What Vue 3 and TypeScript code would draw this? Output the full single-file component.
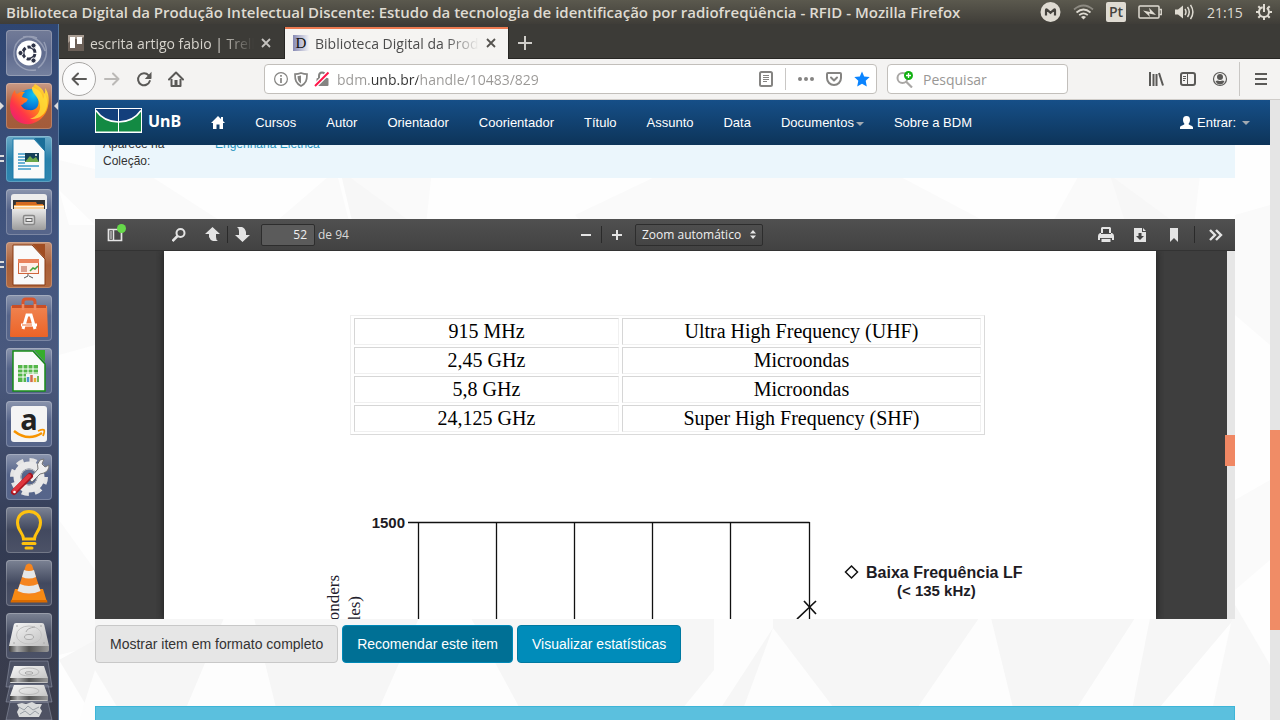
<script setup lang="ts">
import { ref } from 'vue'

interface Frequency {
  value: string
  band: string
}

const address = ref('bdm.unb.br/handle/10483/829')
const query = ref('')
const pageNumber = ref('52')
const zoom = ref('auto')

const menu: string[] = ['Cursos', 'Autor', 'Orientador', 'Coorientador', 'Título', 'Assunto', 'Data']

const frequencies: Frequency[] = [
  { value: '915 MHz', band: 'Ultra High Frequency (UHF)' },
  { value: '2,45 GHz', band: 'Microondas' },
  { value: '5,8 GHz', band: 'Microondas' },
  { value: '24,125 GHz', band: 'Super High Frequency (SHF)' },
]

const gridLines: number[] = [254, 332, 410, 488, 566, 645]
</script>

<template>
  <div class="desktop">
    <header class="panel">
      <div class="panel-title">Biblioteca Digital da Produção Intelectual Discente: Estudo da tecnologia de identificação por radiofreqüência - RFID - Mozilla Firefox</div>
      <div class="indicators">
        <svg width="21" height="20" viewBox="0 0 21 20"><circle cx="10.500" cy="10" r="10" fill="#dfdbd2" /><path d="M6 13.500V8.300q0-1.300 1-.7l3.500 3.200L14 7.600q1-.6 1 .7v5.200" fill="none" stroke="#45433e" stroke-width="2.200" /></svg>
        <svg width="21" height="16" viewBox="0 0 21 16" fill="none" stroke-width="1.700"><path d="M1 5.500q9.500-8 19 0" stroke="#8d8a82" /><path d="M3.500 8.500q7-6 14 0M6.200 11.200q4.300-3.600 8.600 0" stroke="#dfdbd2" /><path d="M8 13q2.500-2 5 0l-2.500 2.600z" fill="#dfdbd2" stroke="none" /></svg>
        <span class="layout-badge">Pt</span>
        <svg width="24" height="14" viewBox="0 0 24 14"><rect x="1" y="1" width="20" height="12" rx="1" fill="none" stroke="#dfdbd2" stroke-width="1.500" /><path d="M21.500 4.500H23.300v5H21.500" fill="none" stroke="#dfdbd2" stroke-width="1.300" /><path d="M5 5.500 12 7l-1-4.200L18 10l-7-1.600 1 3.500z" fill="#dfdbd2" /></svg>
        <svg width="21" height="18" viewBox="0 0 21 18"><path d="M1 6.500h3L9 2.500v13l-5-4H1z" fill="#dfdbd2" /><path d="M11 6q2 3 0 6M13.500 4q3.500 5 0 10M16.500 1.800q4.800 7.200 0 14.400" fill="none" stroke="#dfdbd2" stroke-width="1.500" /></svg>
        <time class="clock">21:15</time>
        <svg width="16" height="16" viewBox="0 0 16 16" fill="none" stroke="#dfdbd2"><circle cx="8" cy="8" r="5" stroke-width="2" stroke-dasharray="27 4.400" stroke-dashoffset="-26" /><path d="M8 0v8M8 13v3M0 8h3M13 8h3M2.300 2.300l2 2M13.700 2.300l-2 2M2.300 13.700l2-2M13.700 13.700l-2-2" stroke-width="2" /></svg>
      </div>
    </header>

    <aside class="launcher">
      <svg class="defs" width="0" height="0">
        <defs>
          <linearGradient id="metal" x1="0" y1="0" x2="1" y2="1"><stop offset="0" stop-color="#f7f7f7" /><stop offset="1" stop-color="#bdbdbd" /></linearGradient>
          <linearGradient id="dark-edge"><stop offset="0" stop-color="#3e3e3e" /><stop offset=".2" stop-color="#aaa" /><stop offset=".5" stop-color="#555" /><stop offset="1" stop-color="#999" /></linearGradient>
          <linearGradient id="cabinet" x1="0" y1="0" x2="0" y2="1"><stop offset="0" stop-color="#e8e8e8" /><stop offset="1" stop-color="#9c9c9c" /></linearGradient>
          <linearGradient id="bag" x1="0" y1="0" x2="0" y2="1"><stop offset="0" stop-color="#f08350" /><stop offset="1" stop-color="#ec6327" /></linearGradient>
          <linearGradient id="fox" x1="1" y1="0" x2="0" y2="1"><stop offset="0" stop-color="#fff44f" /><stop offset=".4" stop-color="#ff980e" /><stop offset=".7" stop-color="#ff3647" /><stop offset="1" stop-color="#e31587" /></linearGradient>
          <radialGradient id="globe" cx=".6" cy=".2" r=".8"><stop offset="0" stop-color="#10c4ee" /><stop offset=".6" stop-color="#0674d9" /><stop offset="1" stop-color="#133686" /></radialGradient>
        </defs>
      </svg>

      <button class="tile dash" aria-label="Dash">
        <svg viewBox="0 0 46 46"><g fill="none" stroke="#c9cedb" stroke-opacity=".45" stroke-width="1.500"><path d="M8 22C9 9 20 4 31 8M38 12c5 10 2 20-6 26M30 40C18 42 7 34 8 22M17 7c10-2 19 4 22 14" /></g><circle cx="23" cy="23" r="12.500" fill="#fff" /><circle cx="23" cy="23" r="6" fill="none" stroke="#2f3448" stroke-width="3" stroke-dasharray="10.500 2" stroke-dashoffset="-1" /><g fill="#2f3448" stroke="#fff"><circle cx="14.500" cy="23" r="2.600" /><circle cx="27.500" cy="15.500" r="2.600" /><circle cx="27.500" cy="30.500" r="2.600" /></g></svg>
      </button>
      <button class="tile firefox" aria-label="Firefox">
        <svg viewBox="0 0 46 46"><circle cx="25" cy="20" r="14" fill="url(#globe)" /><path d="M6 12q1-3 3-5 0 3 2 4 4-3 8-2-3 2-3 5 4 1 6 2-1 3-4 4-1 2-3 2 2 5 8 5c7 1 11-4 9-11-1-5-5-7-6-11l3-4c6 3 9 7 9 10 2-2 1-4 1-6 4 5 5 13 2 22-4 10-13 15-22 14C11 40 4 33 4 23q0-6 2-11z" fill="url(#fox)" /><path d="M26 4c-1 7 7 9 8 18 1 7-4 12-10 14 9 1 16-5 17-13 1-6-1-11-3-13q1 3-1 6C37 10 32 6 26 4z" fill="#ffdf3a" opacity=".8" /></svg>
        <span class="running"></span><span class="focused"></span>
      </button>
      <button class="tile writer" aria-label="LibreOffice Writer">
        <svg viewBox="0 0 46 46"><path d="M7 3h21l11 12v28H7z" fill="#fafafa" stroke="#1a78a8" /><path d="M28 2h11v13z" fill="#1a6e99" /><g stroke="#3d9ac9" stroke-width="1.500"><path d="M12 18h7M12 21h7M12 24h7M12 27h7M12 30h21M12 33h13" /></g><rect x="19" y="17" width="14" height="9" fill="#153f58" /><path d="m19 26 5-6 3 3 3-2 3 5z" fill="#6da84a" /><circle cx="30" cy="19" r="1" fill="#fff" /></svg>
        <span class="multi"></span>
      </button>
      <button class="tile glass" aria-label="Arquivos">
        <svg viewBox="0 0 46 46"><path d="M5 8q0-3 3-3h30q3 0 3 3v12H5z" fill="#ececec" /><path d="M7 11h32v10H7z" fill="#343434" /><path d="M10 13h20l1 2h6v6H9z" fill="#d56a20" /><path d="M8 16h30v6H8z" fill="#f9a94b" /><path d="M8 17.500h30M8 19h30" stroke="#fff3df" /><path d="M6 20h34v19q0 2-2 2H8q-2 0-2-2z" fill="url(#cabinet)" /><rect x="17.500" y="26.500" width="11" height="9" rx="1.500" fill="#ddd" stroke="#888" stroke-width="1.500" /><rect x="20" y="29.500" width="6" height="3" fill="#eee" stroke="#666" /></svg>
      </button>
      <button class="tile impress" aria-label="LibreOffice Impress">
        <svg viewBox="0 0 46 46"><path d="M7 3h19l13 14v26H7z" fill="#fafafa" stroke="#8a3a12" /><path d="M26 2h13v14z" fill="#a14d22" /><rect x="12.500" y="17.500" width="20" height="14" fill="#fff0e8" stroke="#d0663c" /><path d="M12 17h21v4H12z" fill="#e9825b" /><path d="M15 25h6M15 27h6M15 29h6" stroke="#b5533b" /><path d="m24 29 3-3 2 1 3-3" fill="none" stroke="#45a43c" stroke-width="1.500" /><path d="M22 32v2l-4 2M23 34l4 2" stroke="#555" fill="none" /></svg>
        <span class="multi"></span>
      </button>
      <button class="tile glass" aria-label="Programas">
        <svg viewBox="0 0 46 46"><path d="M17 13V7q0-3 3-3h6q3 0 3 3v6" fill="none" stroke="#d8562d" stroke-width="3" /><path d="M5 11h36l1 30q0 1-1 1H5q-1 0-1-1z" fill="url(#bag)" /><path d="M6 10h34v3H6z" fill="#c94f26" /><path d="M17 15V9M29 15V9" stroke="#ef8a62" stroke-width="2.500" /><path d="m17 34 4-14h4l4 14M15 30h16" fill="none" stroke="#fff" stroke-width="3" /><path d="M16 30h10" stroke="#ec6b31" /></svg>
      </button>
      <button class="tile glass" aria-label="LibreOffice Calc">
        <svg viewBox="0 0 46 46"><path d="M7 3h20l12 13v27H7z" fill="#fafafa" stroke="#178c17" stroke-width="1.500" /><path d="M28 2h11v12z" fill="#35ad2c" /><path d="M12 17h20v17H12z" fill="#54b649" /><path d="M12 21h20M12 25h20M12 29h20M17 17v17M22 17v17M27 17v17" stroke="#fff" /><path d="M20 26h13v9H20z" fill="#f3f3f3" /><path d="M22 34v-5" stroke="#4a94cc" stroke-width="2.500" /><path d="M25.500 34v-7" stroke="#d2694e" stroke-width="2.500" /><path d="M29 34v-4" stroke="#e7ae34" stroke-width="2.500" /><path d="M32 34v-6" stroke="#77b85b" stroke-width="2" /></svg>
      </button>
      <button class="tile glass" aria-label="Amazon">
        <svg viewBox="0 0 46 46"><rect x="5" y="5" width="36" height="36" rx="3" fill="#f4f4f4" /><text x="23" y="29" text-anchor="middle" font-family="Open Sans, sans-serif" font-weight="700" font-size="29" fill="#222">a</text><path d="M8 30q14 11 28 2" fill="none" stroke="#f79400" stroke-width="2.500" /><path d="M32 30q5-2 6-1 1 1-1 6" fill="none" stroke="#f79400" stroke-width="1.800" /></svg>
      </button>
      <button class="tile glass" aria-label="Configurações">
        <svg viewBox="0 0 46 46"><circle cx="23" cy="23" r="16.500" fill="none" stroke="#e4e4e4" stroke-width="5" stroke-dasharray="7 5.960" /><circle cx="23" cy="23" r="12" fill="none" stroke="#e9e9e9" stroke-width="7" /><circle cx="23" cy="23" r="8" fill="none" stroke="#b8b8b8" /><path d="m23 25 9-10q-2-5 2-9l4-1-2 5 3 3 4-2q0 6-5 8l-4 1-8 8z" fill="#efefef" stroke="#777" /><path d="m8 38 16-16" stroke="#a61520" stroke-width="6" stroke-linecap="round" /><path d="m8 37 15-15" stroke="#df353d" stroke-width="4" stroke-linecap="round" /><circle cx="8.500" cy="38" r="1.300" fill="#fff" /></svg>
      </button>
      <button class="tile dim" aria-label="Ideias">
        <svg viewBox="0 0 46 46" fill="none" stroke="#ffc20e" stroke-width="3"><path d="M17.500 32c0-6-6-8-6-16.500C11.500 9 16 4.500 23 4.500S34.500 9 34.500 15.500c0 8.500-6 10.500-6 16.500z" /><path d="M17 36.500h12M20 41h6" stroke-linecap="round" /></svg>
      </button>
      <button class="tile dim" aria-label="VLC">
        <svg viewBox="0 0 46 46"><path d="M9 29h28l4 13H5z" fill="#f78a14" /><path d="m5 40-.5 2.500h37L41 40z" fill="#d96b00" /><path d="M20 5q3-3 6 0l9 27q-12 7-24 0z" fill="#f5851f" /><path d="m18 10-2 7q7 3 14 0l-2-7q-5 2-10 0zM14 24l-2.500 7q11.500 5 23 0L32 24q-9 4-18 0z" fill="#e6e8e8" /></svg>
      </button>
      <button class="tile dim" aria-label="Disco">
        <svg viewBox="0 0 46 46"><path d="M10 10h26q2 0 2.300 2L43 33H3l4.700-21q.3-2 2.300-2z" fill="url(#metal)" /><path d="M3 33h40v4q0 2-2 2H5q-2 0-2-2z" fill="url(#dark-edge)" /><ellipse cx="23" cy="22" rx="12.500" ry="9" fill="none" stroke="#c3c3c3" /><ellipse cx="23" cy="24" rx="4.500" ry="2.500" fill="#ddd" stroke="#aaa" /><path d="M29 14q-8 1-9 5M10 13h2M34 13h2M7 30h2M37 30h2" fill="none" stroke="#aaa" /></svg>
      </button>
      <button class="folded" aria-label="Discos e lixeira">
        <svg width="52" height="60" viewBox="0 0 52 60"><g fill="#8c94aa" fill-opacity=".25" stroke="#a4aabd" stroke-opacity=".45"><path d="M7 1h38l4 26H3z" /><path d="M7 25h38l4 17H3z" /><path d="M7 42h38l4 18H3z" /></g><path d="M11 6h30l4 12v4q0 1-1 1H8q-1 0-1-1v-4z" fill="url(#metal)" /><path d="M7 18h38v4H7z" fill="url(#dark-edge)" /><ellipse cx="26" cy="12" rx="10" ry="4" fill="none" stroke="#bbb" /><ellipse cx="26" cy="13" rx="4" ry="1.300" fill="none" stroke="#aaa" /><path d="M11 25h30l4 11v4q0 1-1 1H8q-1 0-1-1v-4z" fill="url(#metal)" /><path d="M7 36h38v4H7z" fill="url(#dark-edge)" /><ellipse cx="26" cy="31" rx="10" ry="3.500" fill="none" stroke="#bbb" /><path d="m14 44 5-1 4 1 6-2 4 2 6 0-2 4 2 3-3 6H16l-2-5 2-4z" fill="#d9dadb" /><path d="m16 47 5 3 4-4 5 4 6-3M17 54l5-3 5 4 5-4 4 3" fill="none" stroke="#999fa6" /></svg>
      </button>
    </aside>

    <section class="browser">
      <div class="tabs" role="tablist">
        <div class="tab" role="tab" aria-selected="false">
          <svg width="16" height="16" viewBox="0 0 16 16"><rect width="16" height="16" fill="#a99d93" /><path d="M0 8 5 3l6 2 5-3v14H0z" fill="#6b6058" /><rect x="2" y="2" width="5" height="11" fill="#fff" /><rect x="9" y="2" width="5" height="7" fill="#fff" /></svg>
          <span class="tab-label">escrita artigo fabio | Trello</span>
          <button class="icon-button" aria-label="Fechar aba"><svg width="12" height="12" viewBox="0 0 12 12" stroke="#c5c3bf" stroke-width="1.800"><path d="m2 2 8 8M10 2l-8 8" /></svg></button>
        </div>
        <div class="tab active" role="tab" aria-selected="true">
          <svg width="16" height="16" viewBox="0 0 16 16"><defs><linearGradient id="dspace"><stop stop-color="#8689b3" /><stop offset="1" stop-color="#f2f2f5" /></linearGradient></defs><rect width="16" height="16" fill="url(#dspace)" /><text x="8" y="13" text-anchor="middle" font-family="Liberation Serif, serif" font-size="15" fill="#111">D</text></svg>
          <span class="tab-label">Biblioteca Digital da Produção</span>
          <button class="icon-button" aria-label="Fechar aba"><svg width="12" height="12" viewBox="0 0 12 12" stroke="#55534f" stroke-width="1.800"><path d="m2 2 8 8M10 2l-8 8" /></svg></button>
        </div>
        <button class="icon-button new-tab" aria-label="Nova aba"><svg width="14" height="14" viewBox="0 0 14 14" stroke="#d0ceca" stroke-width="2"><path d="M7 0v14M0 7h14" /></svg></button>
      </div>

      <nav class="toolbar">
        <button class="back" aria-label="Voltar"><svg width="16" height="16" viewBox="0 0 16 16" fill="none" stroke="#5a5957" stroke-width="2" stroke-linecap="round" stroke-linejoin="round"><path d="M15 8H1.500M7 2.500 1.500 8 7 13.500" /></svg></button>
        <button class="icon-button" aria-label="Avançar"><svg width="16" height="16" viewBox="0 0 16 16" fill="none" stroke="#bbb9b7" stroke-width="2" stroke-linecap="round" stroke-linejoin="round"><path d="M1 8h13.500M9 2.500 14.500 8 9 13.500" /></svg></button>
        <button class="icon-button" aria-label="Recarregar"><svg width="16" height="16" viewBox="0 0 16 16"><path d="M12.600 4.300A6 6 0 1 0 13.800 10" fill="none" stroke="#5a5957" stroke-width="2" stroke-linecap="round" /><path d="M15.500.800v6.400q0 .8-.8.800H8.800z" fill="#5a5957" /></svg></button>
        <button class="icon-button" aria-label="Página inicial"><svg width="16" height="16" viewBox="0 0 16 16" fill="none" stroke="#5a5957" stroke-width="2" stroke-linejoin="round"><path d="M1 8.500 8 1.500l7 7" stroke-linecap="round" /><path d="M3.500 8v7h9V8" /><path d="M8 15V9" stroke-width="3" /></svg></button>

        <div class="field url">
          <svg width="14" height="14" viewBox="0 0 14 14" fill="none" stroke="#858482"><circle cx="7" cy="7" r="6.400" stroke-width="1.200" /><path d="M7 6v5M7 3v1.700" stroke-width="1.700" /></svg>
          <svg width="14" height="15" viewBox="0 0 14 15"><path d="M7 1q3 1.200 6 1.200c0 6-1 9.300-6 11.800-5-2.500-6-5.800-6-11.800Q4 2.200 7 1z" fill="none" stroke="#858482" stroke-width="1.700" /><path d="M7 3.500v8C4.500 10 3.700 8 3.500 4.300z" fill="#858482" /></svg>
          <svg width="16" height="16" viewBox="0 0 16 16"><path d="M5 7V5q0-3.500 3-3.500T11.500 5v2" fill="none" stroke="#858482" stroke-width="2" /><rect x="2.500" y="7" width="12" height="8" rx="1" fill="#858482" /><path d="M1 15 14.500 1.500" stroke="#fff" stroke-width="4.500" /><path d="M1 15 14.500 1.500" stroke="#ff1548" stroke-width="2" /></svg>
          <input v-model="address" class="address" aria-label="Endereço" />
          <button class="icon-button" aria-label="Modo de leitura"><svg width="14" height="16" viewBox="0 0 14 16" fill="none" stroke="#858482"><rect x="1" y="1" width="12" height="14" rx="1.500" stroke-width="2" /><path d="M4 4.500h6M4 6.500h6M4 8.500h6M4 10.500h4" /></svg></button>
          <span class="divider"></span>
          <button class="icon-button" aria-label="Mais ações"><svg width="16" height="4" viewBox="0 0 16 4" fill="#858482"><circle cx="2" cy="2" r="2" /><circle cx="8" cy="2" r="2" /><circle cx="14" cy="2" r="2" /></svg></button>
          <button class="icon-button" aria-label="Pocket"><svg width="16" height="14" viewBox="0 0 16 14" fill="none" stroke="#858482" stroke-width="2" stroke-linejoin="round" stroke-linecap="round"><path d="M2 1h12q1 0 1 1v4a7 7 0 0 1-14 0V2q0-1 1-1z" /><path d="m5 5.500 3 3 3-3" /></svg></button>
          <button class="icon-button" aria-label="Favorito"><svg width="16" height="16" viewBox="0 0 16 16"><path d="m8 .5 2.200 4.900 5.500.6-4 3.800 1.100 5.700L8 12.800l-4.800 2.700 1.100-5.700L.3 6l5.500-.6z" fill="#0a84ff" /></svg></button>
        </div>

        <div class="field search">
          <svg width="18" height="17" viewBox="0 0 18 17"><circle cx="6.500" cy="7" r="5" fill="none" stroke="#a9a7a5" stroke-width="2" /><path d="m10 10.500 6 6" stroke="#a9a7a5" stroke-width="2.200" /><circle cx="12.500" cy="4.500" r="4.500" fill="#12b012" /><path d="M12.500 2v5M10 4.500h5" stroke="#fff" stroke-width="1.300" /></svg>
          <input v-model="query" placeholder="Pesquisar" aria-label="Pesquisar" />
        </div>

        <div class="tools">
          <button class="icon-button" aria-label="Biblioteca"><svg width="16" height="16" viewBox="0 0 16 16" stroke="#5a5957" stroke-width="2"><path d="M2 1v14M5.500 3v12M8.500 3v12M11 2l4 12.500" /></svg></button>
          <button class="icon-button" aria-label="Painel lateral"><svg width="16" height="14" viewBox="0 0 16 14" fill="none" stroke="#5a5957"><rect x="1" y="1" width="14" height="12" rx="2" stroke-width="2" /><path d="M7.500 1v12M3 4.500h3M3 6.500h3M3 8.500h2" /></svg></button>
          <button class="icon-button" aria-label="Conta"><svg width="16" height="16" viewBox="0 0 16 16"><circle cx="8" cy="8" r="6.500" fill="none" stroke="#5a5957" stroke-width="1.200" /><circle cx="8" cy="6" r="3" fill="#5a5957" /><path d="M3.500 10q1.500-.5 2.500-.5 2 1 4 0 1 0 2.500.5-1.500 3.500-4.500 3.500T3.500 10z" fill="#5a5957" /></svg></button>
          <span class="divider tall"></span>
          <button class="icon-button" aria-label="Abrir menu"><svg width="12" height="12" viewBox="0 0 12 12" stroke="#5a5957" stroke-width="2"><path d="M0 1h12M0 6h12M0 11h12" /></svg></button>
        </div>
      </nav>

      <div class="viewport">
        <div class="site">
          <svg class="facets" viewBox="0 0 1211 620" preserveAspectRatio="none">
            <path d="M60 75h30l78 50H10L0 90V60zM277 70l14 55h-78zM281 70h92l-6 55h-28zM516 115l84-40h64l-4 50H525zM664 75h174l-38 50H660zM838 75l95 50H780zM1020 75h31l16 50H992zM1051 75h90l-6 50h-68zM0 255l36-10V125L0 90zM0 420l36 50v50L0 550zM1176 115l35-10v140l-35-30zM1176 400l35-20v80l-35 30z" fill="#fafafa" />
            <path d="M281 70l75 55h-62zM1051 75l68 50h-52z" fill="#f7f7f7" />
            <path d="M0 520h36v26L0 555z" fill="#f9f9f9" />
            <path d="M36 518h1140l-86 102H36l-36-60 36-20z" fill="#f6f6f6" />
            <path d="M165 518h30l25 102H122zM360 518h52l55 102H315zM655 518h59v10l-60 92h-40l41-50zM714 528l70 92H680zM850 620l70-102h12l25 102zM1010 620l66-102h15l-20 102zM36 570l30 50H20z" fill="#fdfdfd" />
            <path d="M1176 505l35 60v55h-60z" fill="#f8f8f8" />
          </svg>

          <header class="navbar">
            <a class="brand" href="#" aria-label="UnB">
              <svg width="47" height="25" viewBox="0 0 47 25"><rect width="47" height="25" fill="#fff" /><path d="M1 1h22v22.500H1z" fill="#138a43" /><path d="M24 1h22v22.500H24z" fill="#138a43" /><path d="M1 1h22v13Q8 13 1 2zM46 1H24v13q15-1 22-12z" fill="#133f7c" /><path d="M1 2.500Q9 14 23.500 14T46 2.500" fill="none" stroke="#fff" stroke-width="1.600" /><path d="M23.500 0v25" stroke="#fff" /></svg>
              <span>UnB</span>
            </a>
            <nav class="menu">
              <a href="#" aria-label="Início"><svg width="14" height="13" viewBox="0 0 14 13"><path d="M7 0 0 7h2v6h3.500V8.500h3V13H12V7h2l-2-2V1h-2v2z" fill="#fff" /></svg></a>
              <a v-for="item in menu" :key="item" href="#">{{ item }}</a>
              <a href="#">Documentos<span class="caret"></span></a>
              <a href="#">Sobre a BDM</a>
            </nav>
            <a class="sign-in" href="#">
              <svg width="13" height="13" viewBox="0 0 13 13"><path d="M6.500 0C9 0 10 1.500 10 4c0 2-1 3-1.500 4 0 1 4.500 1.500 4.500 3.500V13H0v-1.500C0 9.500 4.500 9 4.500 8 4 7 3 6 3 4c0-2.500 1-4 3.500-4z" fill="#fff" /></svg>
              Entrar: <span class="caret"></span>
            </a>
          </header>

          <main class="content">
            <dl class="record">
              <dt>Aparece na Coleção:</dt>
              <dd><a href="#">Engenharia Elétrica</a></dd>
            </dl>

            <section class="viewer">
              <div class="pdf-bar">
                <div class="pdf-left">
                  <button class="icon-button" aria-label="Exibir painel"><svg width="19" height="22" viewBox="0 0 19 22"><path d="M1.500 5.500h13v11h-13z" fill="none" stroke="#e4e4e4" stroke-width="1.700" /><path d="M3 7h2v8H3z" fill="#999" /><path d="M6.500 5v12" stroke="#e4e4e4" stroke-width="1.500" /><circle cx="14.500" cy="4.500" r="4.500" fill="#66d94a" /></svg></button>
                  <button class="icon-button find" aria-label="Localizar"><svg width="14" height="14" viewBox="0 0 14 14" fill="none" stroke="#e4e4e4" stroke-width="2"><circle cx="8.500" cy="5" r="4" /><path d="m5.500 8-5 5" stroke-width="2.500" /></svg></button>
                  <button class="icon-button" aria-label="Página anterior"><svg width="15" height="15" viewBox="0 0 15 15"><path d="M7.500 0 15 7h-4v3q0 3 2 4H8q-3-1-4-4V7H0z" fill="#e4e4e4" /></svg></button>
                  <span class="pdf-rule"></span>
                  <button class="icon-button" aria-label="Próxima página"><svg width="15" height="15" viewBox="0 0 15 15"><path d="M7.500 15 15 8h-4V5q-1-4-4-5H2q2 1 2 4v4H0z" fill="#e4e4e4" /></svg></button>
                  <label class="page-field"><input v-model="pageNumber" aria-label="Página" /><span>de 94</span></label>
                </div>
                <div class="pdf-center">
                  <button class="icon-button" aria-label="Reduzir"><svg width="10" height="10" viewBox="0 0 10 10" stroke="#e4e4e4" stroke-width="2"><path d="M0 5h10" /></svg></button>
                  <span class="pdf-rule"></span>
                  <button class="icon-button" aria-label="Ampliar"><svg width="10" height="10" viewBox="0 0 10 10" stroke="#e4e4e4" stroke-width="2"><path d="M0 5h10M5 0v10" /></svg></button>
                  <label class="zoom-field">
                    <select v-model="zoom" aria-label="Zoom"><option value="auto">Zoom automático</option></select>
                    <svg width="6" height="9" viewBox="0 0 6 9" fill="#e8e8e8"><path d="M3 0 6 3.500H0zM3 9 0 5.500h6z" /></svg>
                  </label>
                </div>
                <div class="pdf-right">
                  <button class="icon-button" aria-label="Imprimir"><svg width="16" height="15" viewBox="0 0 16 15"><path d="M4 0h8l1 1v5H3V1z" fill="#e4e4e4" /><path d="M5 2h6v4H5z" fill="#444" /><path d="M2 6h1v1h10V6h1q2 1 2 3v4h-2v-2H2v2H0V9q0-2 2-3z" fill="#e4e4e4" /><path d="M2 8h12v3H2z" fill="#e4e4e4" /><path d="M3.500 12h9v3h-9z" fill="#e4e4e4" /><path d="M3 11.500h10" stroke="#555" /></svg></button>
                  <button class="icon-button" aria-label="Baixar"><svg width="12" height="14" viewBox="0 0 12 14"><path d="M0 0h8v4h4v10H0zM9 0l3 3H9z" fill="#e4e4e4" /><path d="M4.500 5h3v3H10l-4 4-4-4h2.500z" fill="#444" /></svg></button>
                  <button class="icon-button bookmark" aria-label="Marcador"><svg width="8" height="14" viewBox="0 0 8 14"><path d="M0 0h8v14l-4-4-4 4z" fill="#e4e4e4" /></svg></button>
                  <span class="pdf-rule"></span>
                  <button class="icon-button" aria-label="Ferramentas"><svg width="14" height="12" viewBox="0 0 14 12" fill="none" stroke="#e4e4e4" stroke-width="2.400"><path d="m1 1 5 5-5 5M7 1l5 5-5 5" /></svg></button>
                </div>
              </div>
              <div class="pdf-body">
                <div class="sheet">
                  <table class="frequencies">
                    <tbody>
                      <tr v-for="row in frequencies" :key="row.value"><td>{{ row.value }}</td><td>{{ row.band }}</td></tr>
                    </tbody>
                  </table>
                  <svg class="chart" width="992" height="120" viewBox="0 0 992 120">
                    <g fill="none" stroke="#111" stroke-width="1.300">
                      <path d="M244 23.500h401.500" />
                      <path v-for="x in gridLines" :key="x" :d="`M${x}.5 23v97`" />
                    </g>
                    <path d="m633 120 19-18M640 102l12 13" stroke="#111" stroke-width="1.700" />
                    <path d="m687.500 67 6 6-6 6-6-6z" fill="none" stroke="#111" stroke-width="1.500" />
                    <g class="chart-text">
                      <text x="241" y="29" text-anchor="end" font-size="15">1500</text>
                      <text x="702" y="79" font-size="16">Baixa Frequência LF</text>
                      <text x="733" y="97" font-size="15">(&lt; 135 kHz)</text>
                    </g>
                    <g class="axis-text" text-anchor="end">
                      <text transform="translate(175 76) rotate(-90)">onders</text>
                      <text transform="translate(196 97) rotate(-90)">les)</text>
                    </g>
                  </svg>
                </div>
                <div class="pdf-track"><div class="pdf-thumb"></div></div>
              </div>
            </section>

            <div class="actions">
              <button class="action plain">Mostrar item em formato completo</button>
              <button class="action strong">Recomendar este item</button>
              <button class="action primary">Visualizar estatísticas</button>
            </div>
            <div class="footer-band"></div>
          </main>
        </div>
        <div class="track"><div class="thumb"></div></div>
      </div>
    </section>
  </div>
</template>

<style>
body {
  margin: 0;
}
</style>

<style scoped>
* {
  box-sizing: border-box;
}
button {
  border: 0;
  padding: 0;
  background: none;
  font: inherit;
  color: inherit;
}
input,
select {
  border: 0;
  padding: 0;
  margin: 0;
  background: none;
  font: inherit;
  outline: 0;
  min-width: 0;
}
svg {
  display: block;
  flex: none;
}
a {
  text-decoration: none;
}
.desktop {
  height: 100vh;
  display: grid;
  grid-template: 24px minmax(0, 1fr) / 59px minmax(0, 1fr);
  overflow: hidden;
  font-family: "Open Sans", "Noto Sans", sans-serif;
}
.panel {
  grid-column: 1 / -1;
  display: flex;
  align-items: center;
  justify-content: space-between;
  padding: 0 8px 0 6px;
  background: linear-gradient(#5b594e, #3f3d38);
  color: #dfdbd2;
}
.panel-title {
  font-size: 15px;
  line-height: 24px;
  font-weight: 600;
  white-space: nowrap;
}
.indicators {
  display: flex;
  align-items: center;
  gap: 12px;
}
.layout-badge {
  width: 20px;
  height: 20px;
  border-radius: 2px;
  background: #dfdbd2;
  color: #45433e;
  font-size: 14px;
  line-height: 20px;
  font-weight: 600;
  text-align: center;
}
.clock {
  font-size: 14px;
  width: 37px;
}
.launcher {
  display: flex;
  flex-direction: column;
  align-items: center;
  gap: 7px;
  padding: 6px 0 0;
  overflow: hidden;
  border-right: 1px solid #55779f;
  background: linear-gradient(#2f4672, #44567f 35%, #4a597d 50%, #333b53 75%, #3b3d4b);
}
.defs {
  position: absolute;
}
.tile {
  position: relative;
  flex: none;
  width: 46px;
  height: 46px;
  border-radius: 4px;
  box-shadow: inset 0 0 0 1px rgba(255, 255, 255, 0.22);
}
.tile svg {
  width: 46px;
  height: 46px;
  overflow: visible;
}
.dash {
  background: linear-gradient(#727b97, #5f6b8e 50%, #75819f);
}
.firefox {
  background: linear-gradient(#c99a86, #a65f3e 50%, #a35b3a);
}
.writer {
  background: linear-gradient(#69a9c7, #2a81ab 50%, #2f86b0);
}
.impress {
  background: linear-gradient(#c58e70, #a95f38 50%, #b0683f);
}
.glass {
  background: linear-gradient(#8b95ad, #55648a 45%, #56658a);
}
.dim {
  background: linear-gradient(#7c8394, #42495f 50%, #4c5267);
}
.running,
.focused {
  position: absolute;
  top: 19px;
  border: 4px solid transparent;
}
.running {
  left: -6px;
  border-left-color: #dcdcdc;
}
.focused {
  right: -6px;
  border-right-color: #dcdcdc;
}
.multi {
  position: absolute;
  top: 19px;
  left: -6px;
  width: 4px;
  height: 7px;
  border: solid #dcdcdc;
  border-width: 2px 0;
}
.folded {
  flex: none;
  margin-top: -6px;
}
.browser {
  display: flex;
  flex-direction: column;
  min-height: 0;
}
.tabs {
  display: flex;
  flex: none;
  height: 35px;
  padding-top: 3px;
  background: #3c3b37;
  box-shadow: inset 0 -1px #272623;
}
.tab {
  display: flex;
  align-items: center;
  width: 225px;
  padding: 0 12px 0 9px;
  color: #d6d3cc;
  font-size: 14px;
}
.tab.active {
  background: #f5f4f2;
  border: solid #272623;
  border-width: 0 1px;
  padding-left: 8px;
  padding-right: 11px;
  box-shadow: inset 0 2px #ee7b52;
  color: #4c4c4c;
}
.tab-label {
  flex: 1;
  margin: 0 6px;
  overflow: hidden;
  white-space: nowrap;
  mask-image: linear-gradient(90deg, #000 80%, transparent);
}
.icon-button {
  display: grid;
  place-items: center;
  flex: none;
}
.new-tab {
  margin-left: 9px;
}
.toolbar {
  display: flex;
  flex: none;
  align-items: center;
  height: 41px;
  padding: 0 13px 0 3px;
  gap: 16px;
  background: #f4f3f2;
  border-bottom: 1px solid #cfccc9;
}
.back {
  width: 34px;
  height: 34px;
  border: 1px solid #a8a6a4;
  border-radius: 50%;
  background: #fbfbfb;
  display: grid;
  place-items: center;
  margin-right: -8px;
}
.field {
  display: flex;
  align-items: center;
  height: 30px;
  border: 1px solid #c2bfbb;
  border-radius: 4px;
  background: #fff;
  font-size: 14px;
}
.url {
  flex: 1;
  min-width: 0;
  margin-left: 64px;
  margin-right: -6px;
  padding: 0 6px 0 9px;
  gap: 6px;
}
.address {
  flex: 1;
  height: 28px;
  margin-left: 1px;
  color: transparent;
  background: linear-gradient(90deg, #999795 35px, #333 35px, #333 81px, #999795 81px);
  background-clip: text;
  -webkit-background-clip: text;
}
.url .icon-button {
  margin-left: 6px;
}
.divider {
  width: 1px;
  height: 22px;
  margin: 0 0 0 6px;
  background: #c9c7c5;
}
.search {
  width: 181px;
  padding: 0 8px;
  gap: 9px;
}
.search input {
  flex: 1;
  color: #333;
}
.search input::placeholder {
  color: #999795;
}
.tools {
  display: flex;
  align-items: center;
  gap: 16px;
  margin-left: 64px;
}
.divider.tall {
  height: 34px;
  margin: 0 -5px;
}
.tools .divider + .icon-button {
  margin-left: 4px;
}
.viewport {
  flex: 1;
  min-height: 0;
  display: flex;
}
.site {
  position: relative;
  flex: 1;
  min-width: 0;
  overflow: hidden;
  background: #fefefe;
  font-family: "Liberation Sans", Arial, sans-serif;
  display: flex;
  flex-direction: column;
}
.facets {
  position: absolute;
  inset: 0;
  width: 100%;
  height: 100%;
}
.navbar {
  position: relative;
  z-index: 1;
  flex: none;
  display: flex;
  align-items: center;
  height: 45px;
  padding: 0 20px 0 36px;
  background: linear-gradient(#164f88, #0d3459);
  font-size: 13px;
}
.navbar a {
  color: #fff;
}
.brand {
  display: flex;
  align-items: center;
  gap: 6px;
  margin: -4px 15px 0 0;
  font: 700 16px "Noto Sans", sans-serif;
}
.menu {
  display: flex;
  align-items: center;
  flex: 1;
}
.menu a {
  padding: 0 15px;
}
.caret {
  display: inline-block;
  margin-left: 2px;
  vertical-align: middle;
  border: 4px solid transparent;
  border-top-color: #a1a9b1;
  border-bottom: 0;
}
.sign-in {
  display: flex;
  align-items: center;
  gap: 4px;
}
.content {
  position: relative;
  flex: 1;
  display: flex;
  flex-direction: column;
  margin: -9px 35px 0 36px;
}
.record {
  display: grid;
  grid-template-columns: 112px 1fr;
  margin: 0;
  padding: 0 8px 8px;
  background: #ebf6fc;
  color: #333;
  font-size: 12px;
  line-height: 17px;
}
.record dt {
  width: 80px;
}
.record dd {
  margin: 0;
}
.record a {
  color: #1f93bd;
}
.viewer {
  display: flex;
  flex-direction: column;
  height: 400px;
  margin-top: 41px;
  background: #3e3e3e;
}
.pdf-bar {
  display: grid;
  grid-template-columns: 1fr auto 1fr;
  align-items: center;
  height: 32px;
  flex: none;
  background: linear-gradient(#505050, #424242);
  border-bottom: 1px solid #333;
  color: #d9d9d9;
  font: 12px "Open Sans", "Noto Sans", sans-serif;
}
.pdf-left,
.pdf-center,
.pdf-right {
  display: flex;
  align-items: center;
}
.pdf-left {
  gap: 7px;
  padding-left: 12px;
}
.find {
  margin: 0 12px 0 39px;
}
.pdf-rule {
  width: 1px;
  height: 17px;
  background: #2a2a2a;
}
.page-field {
  display: flex;
  align-items: center;
  gap: 3px;
  margin-left: 4px;
}
.page-field input {
  width: 54px;
  height: 22px;
  padding-right: 7px;
  border: 1px solid #2d2d2d;
  border-radius: 2px;
  background: #5b5b5b;
  color: #f0f0f0;
  text-align: right;
}
.pdf-center {
  gap: 10px;
  padding-left: 14px;
}
.zoom-field {
  position: relative;
  width: 128px;
  margin-left: 3px;
}
.zoom-field select {
  appearance: none;
  width: 100%;
  height: 22px;
  display: block;
  padding-left: 6px;
  border: 1px solid #2d2d2d;
  border-radius: 2px;
  background: linear-gradient(#4e4e4e, #444);
  color: #f0f0f0;
}
.zoom-field svg {
  position: absolute;
  right: 7px;
  top: 6px;
}
.pdf-right {
  justify-content: flex-end;
  gap: 20px;
  padding-right: 12px;
}
.bookmark {
  margin-left: 4px;
}
.pdf-right .pdf-rule {
  margin: 0 -6px 0 -4px;
}
.pdf-body {
  flex: 1;
  min-height: 0;
  display: flex;
}
.sheet {
  flex: 1;
  min-width: 0;
  margin: 0 71px 0 69px;
  padding-top: 64px;
  overflow: hidden;
  background: #fff;
  box-shadow: 0 0 8px #1c1c1c;
  clip-path: inset(0 -8px);
}
.frequencies {
  width: 64%;
  margin-left: 186px;
  table-layout: fixed;
  border-collapse: separate;
  border-spacing: 3px 2px;
  border: 1px solid;
  border-color: #efefef #dadada #dadada #efefef;
  font: 20px/23px "Liberation Serif", "Times New Roman", serif;
  color: #000;
  text-align: center;
}
.frequencies td {
  height: 27px;
  padding: 0 0 1px;
  border: 1px solid;
  border-color: #d6d6d6 #f0f0f0 #f0f0f0 #d6d6d6;
}
.frequencies td:first-child {
  width: 265px;
}
.chart {
  margin-top: 64px;
}
.chart-text {
  font-family: "Liberation Sans", Arial, sans-serif;
  font-weight: 700;
  fill: #1d1b24;
}
.axis-text {
  font-family: "Liberation Serif", serif;
  font-size: 17px;
  fill: #22202c;
}
.pdf-track {
  width: 8px;
  display: flex;
  flex-direction: column;
  align-items: flex-end;
  background: #e6e6e6;
}
.pdf-thumb {
  width: 10px;
  height: 31px;
  margin-top: 184px;
  background: #f08763;
}
.actions {
  display: flex;
  gap: 4px;
  margin-top: 6px;
}
.action {
  height: 38px;
  padding: 0 14px;
  border: 1px solid;
  border-radius: 4px;
  font-size: 14px;
  color: #fff;
}
.action.plain {
  background: #e6e6e6;
  border-color: #c8c8c8;
  color: #333;
}
.action.strong {
  background: #007095;
  border-color: #0088b6;
}
.action.primary {
  background: #008cba;
  border-color: #0079a1;
}
.footer-band {
  flex: 1;
  min-height: 14px;
  margin-top: 43px;
  background: #5bc0de;
  border: 1px solid #3db5d8;
  border-bottom: 0;
}
.track {
  width: 10px;
  display: flex;
  flex-direction: column;
  background: #e5e5e5;
}
.thumb {
  height: 200px;
  margin-top: 330px;
  background: #f08c66;
}
</style>
